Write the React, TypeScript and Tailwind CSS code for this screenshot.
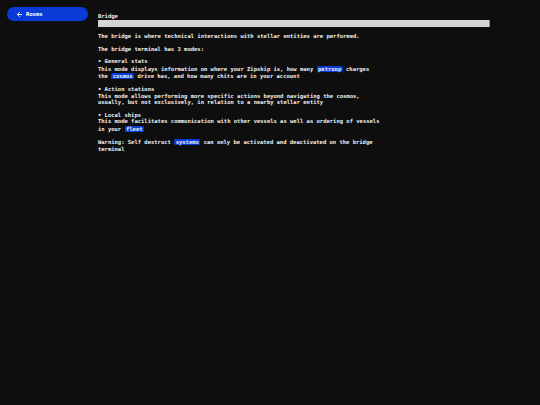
import { ArrowLeft } from "lucide-react";

function Chip({ children }: { children: React.ReactNode }) {
  return (
    <span className="inline-block rounded-[1.5px] bg-[#0a3bd6] px-[1.5px] leading-[6px] my-[0.75px]">
      {children}
    </span>
  );
}

export default function App() {
  return (
    <div
      className="flex min-h-[405px] w-full bg-[#0e0e0e] text-[#f2f2f2] font-bold"
      style={{ fontFamily: '"DejaVu Sans Mono", "Liberation Mono", monospace' }}
    >
      <aside className="w-[98px] shrink-0 pl-[7px] pr-[10px] pt-[7px]">
        <button className="flex h-[14px] w-[81px] items-center gap-[3px] rounded-full bg-[#0a3bd6] pl-[9px] text-[5.5px] text-white">
          <ArrowLeft size={7} strokeWidth={3} />
          <span>Rooms</span>
        </button>
      </aside>

      <main className="w-[392px] pt-[12.5px] text-[5.5px] leading-[6.5px]">
        <h1>Bridge</h1>
        <div className="mt-[1px] h-[6.5px] w-full border-r border-[#8a8a8a] bg-[#d4d4d4]" />

        <div className="mt-[6.5px] max-w-[85.3ch] space-y-[6.2px]">
          <p>The bridge is where technical interactions with stellar entities are performed.</p>
          <p>The bridge terminal has 3 modes:</p>

          <div>
            <p>• General stats</p>
            <p>
              This mode displays information on where your Zipship is, how many <Chip>petroop</Chip> charges the{" "}
              <Chip>cosmos</Chip> drive has, and how many chits are in your account
            </p>
          </div>

          <div>
            <p>• Action stations</p>
            <p>
              This mode allows performing more specific actions beyond navigating the cosmos, usually, but not
              exclusively, in relation to a nearby stellar entity
            </p>
          </div>

          <div>
            <p>• Local ships</p>
            <p>
              This mode facilitates communication with other vessels as well as ordering of vessels in your{" "}
              <Chip>fleet</Chip>
            </p>
          </div>

          <p>
            Warning: Self destruct <Chip>systems</Chip> can only be activated and deactivated on the bridge terminal
          </p>
        </div>
      </main>
    </div>
  );
}
